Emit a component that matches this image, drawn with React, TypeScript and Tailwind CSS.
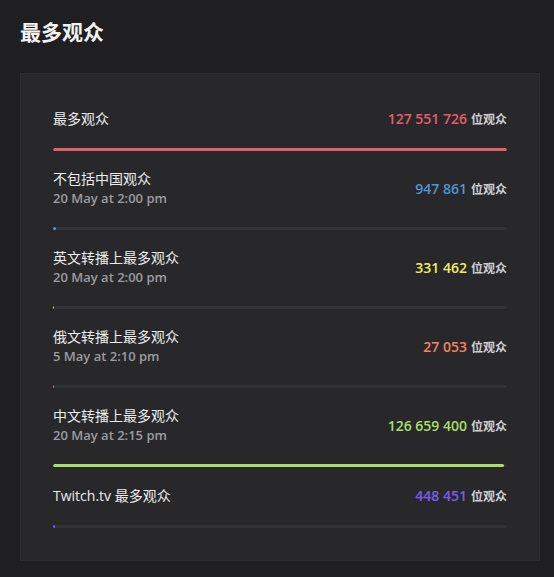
const rows = [
  { label: "最多观众", date: "", value: 127551726, color: "text-[#e25d6e]", bar: "bg-[#e0606f]" },
  { label: "不包括中国观众", date: "20 May at 2:00 pm", value: 947861, color: "text-[#5094d6]", bar: "bg-[#5ba0d8]" },
  { label: "英文转播上最多观众", date: "20 May at 2:00 pm", value: 331462, color: "text-[#eeee5c]", bar: "bg-[#eeee5c]" },
  { label: "俄文转播上最多观众", date: "5 May at 2:10 pm", value: 27053, color: "text-[#f2835f]", bar: "bg-[#f2835f]" },
  { label: "中文转播上最多观众", date: "20 May at 2:15 pm", value: 126659400, color: "text-[#a6df6c]", bar: "bg-[#a6e06a]" },
  { label: "Twitch.tv 最多观众", date: "", value: 448451, color: "text-[#7b5cf2]", bar: "bg-[#7b5cf2]" },
];

const total = 127551726;

const fmt = (n: number) => n.toString().replace(/\B(?=(\d{3})+(?!\d))/g, " ");

export default function App() {
  return (
    <div
      className="w-[554px] h-[577px] bg-[#1f1f21] pl-[20px] pr-[14px] pt-[18px]"
      style={{ fontFamily: '"Open Sans", "Noto Sans CJK SC", sans-serif' }}
    >
      <h1 className="text-[21px] leading-[28px] font-bold text-[#f2f2f2]">最多观众</h1>

      <div className="mt-[27px] bg-[#28282b] border border-[#2d2d30] px-[32px] pt-[34px] pb-[32px]">
        {rows.map((r, i) => (
          <div key={i} className={i > 0 ? "mt-[18.5px]" : ""}>
            <div className="flex items-center justify-between">
              <div>
                <div className="text-[14px] leading-[20px] text-[#ececec]">{r.label}</div>
                {r.date && (
                  <div className="text-[13px] leading-[19px] font-semibold text-[#9c9ca0]">{r.date}</div>
                )}
              </div>
              <div className="flex items-baseline gap-[4px]">
                <span className={`text-[14px] font-semibold ${r.color}`}>{fmt(r.value)}</span>
                <span className="text-[12px] font-bold text-[#cfcfd2]">位观众</span>
              </div>
            </div>
            <div className="mt-[18.5px] h-[3px] bg-[#323337] rounded-full overflow-hidden">
              <div
                className={`h-full rounded-full ${r.bar}`}
                style={{ width: `${Math.max((r.value / total) * 100, 0.2)}%` }}
              />
            </div>
          </div>
        ))}
      </div>
    </div>
  );
}
